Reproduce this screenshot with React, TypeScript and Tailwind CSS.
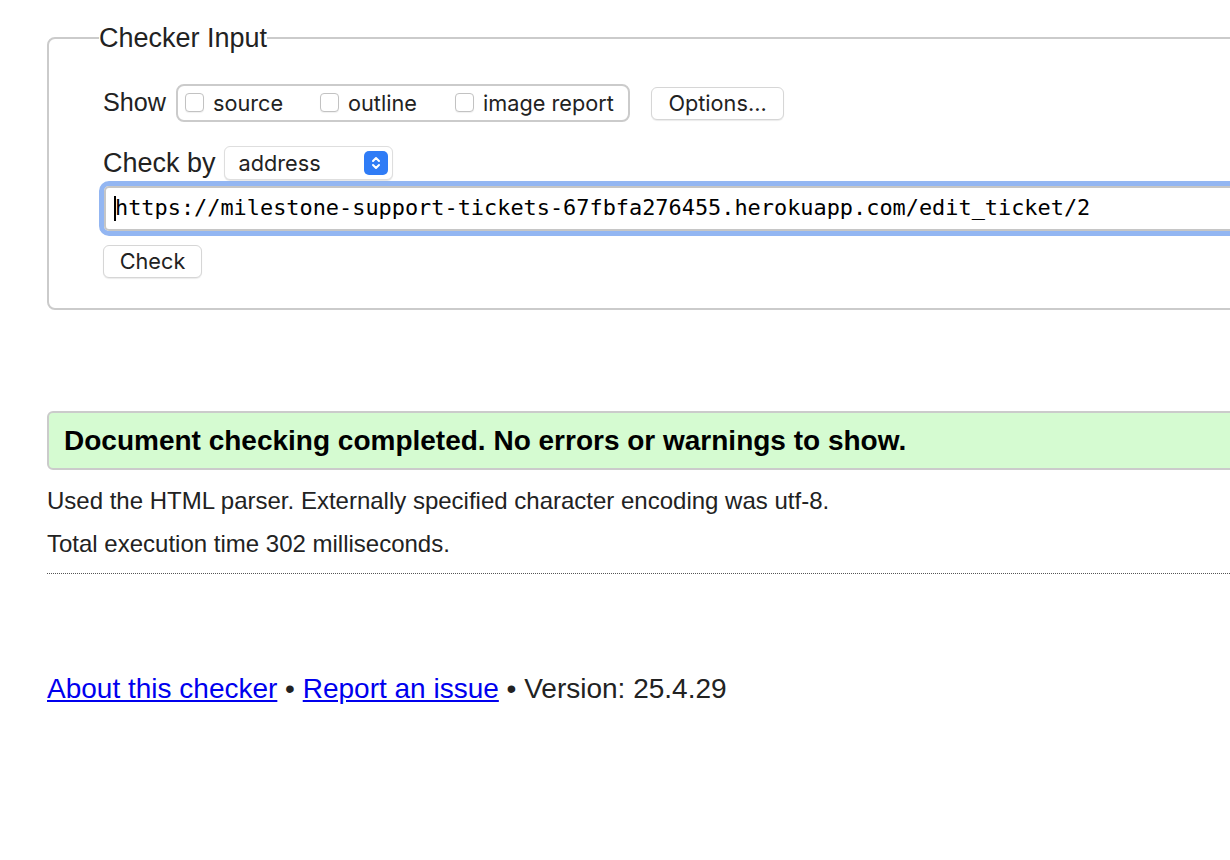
import React from "react";

function Box() {
  return (
    <span className="inline-block shrink-0 w-[19px] h-[19px] rounded-[4px] border border-[#c2c2c2] bg-white shadow-[0_1px_1px_rgba(0,0,0,0.06)]" />
  );
}

export default function App() {
  const sans = "font-['Liberation_Sans','Helvetica','Arial',sans-serif]";
  const ui = "font-['Inter','Liberation_Sans',sans-serif]";
  return (
    <div className={`w-[1230px] h-[860px] overflow-hidden bg-white text-[#222] ${sans}`}>
      <div className="w-[1400px] pl-[47px] pt-[23px]">
        <fieldset className="border-2 border-[#cbcbcb] rounded-[8px] pl-[54px] pr-4 pt-[31px] pb-[30px] m-0 min-w-0">
          <legend className="-ml-1 px-0 text-[27px] leading-[30px] text-[#222]">Checker Input</legend>
          <div className="flex items-center h-[38px]">
            <span className="text-[25.2px] leading-none">Show</span>
            <div className={`ml-[10px] flex items-center h-[38px] w-[454px] rounded-[8px] border-2 border-[#cbcbcb] pl-[7px] ${ui} text-[21.7px]`}>
              <span className="flex items-center w-[135px]"><Box /><span className="ml-[9px]">source</span></span>
              <span className="flex items-center w-[135px]"><Box /><span className="ml-[9px]">outline</span></span>
              <span className="flex items-center"><Box /><span className="ml-[9px]">image report</span></span>
            </div>
            <div className={`ml-[21px] flex items-center justify-center w-[133px] h-[33px] rounded-[6px] bg-white border border-[#d6d6d6] shadow-[0_1px_1px_rgba(0,0,0,0.08)] ${ui} text-[21.7px]`}>
              Options...
            </div>
          </div>
          <div className="flex items-center mt-[24px] h-[34px]">
            <span className="text-[27px] leading-none">Check by</span>
            <div className={`ml-[8px] flex items-center justify-between w-[169px] h-[34px] rounded-[6px] bg-white border border-[#dedede] shadow-[0_1px_1px_rgba(0,0,0,0.1)] pl-[14px] pr-[4px] ${ui} text-[21.7px]`}>
              <span>address</span>
              <span className="flex items-center justify-center w-[24px] h-[24px] rounded-[5px] bg-[#2f7cf6]">
                <svg width="12" height="16" viewBox="0 0 12 16" fill="none" stroke="white" strokeWidth="2" strokeLinecap="round" strokeLinejoin="round">
                  <path d="M3 6 L6 3 L9 6" />
                  <path d="M3 10 L6 13 L9 10" />
                </svg>
              </span>
            </div>
          </div>
          <div className="mt-[1px] -ml-[4px] h-[55px] rounded-[10px] border-[5px] border-[#93b6f2]">
            <div className="relative h-full rounded-[5px] border-2 border-[#c6c6c6] bg-white flex items-center pl-[9px]">
              <span className="font-['DejaVu_Sans_Mono','Menlo',monospace] text-[21.9px] text-black whitespace-nowrap">
                https://milestone-support-tickets-67fbfa276455.herokuapp.com/edit_ticket/2
              </span>
              <span className="absolute left-[8px] top-[8px] w-[2px] h-[25px] bg-black" />
            </div>
          </div>
          <div className={`mt-[9px] flex items-center justify-center w-[99px] h-[33px] rounded-[6px] bg-white border border-[#d6d6d6] shadow-[0_1px_1px_rgba(0,0,0,0.08)] ${ui} text-[21.7px]`}>
            Check
          </div>
        </fieldset>

        <div className="mt-[101px] h-[59px] rounded-[6px] border-2 border-[#cbcbcb] bg-[#d5fbd1] flex items-center pl-[15px]">
          <span className="font-bold text-[28px] text-black">Document checking completed. No errors or warnings to show.</span>
        </div>
        <p className="mt-[17px] text-[24px] leading-[28px]">Used the HTML parser. Externally specified character encoding was utf-8.</p>
        <p className="mt-[15px] text-[24px] leading-[28px]">Total execution time 302 milliseconds.</p>
        <div className="mt-[15px] border-t border-dotted border-[#555]" />
        <p className="mt-[99px] text-[28px] leading-[32px]">
          <a href="#" className="text-[#0000ee] underline">About this checker</a>
          {" • "}
          <a href="#" className="text-[#0000ee] underline">Report an issue</a>
          {" • Version: 25.4.29"}
        </p>
      </div>
    </div>
  );
}
